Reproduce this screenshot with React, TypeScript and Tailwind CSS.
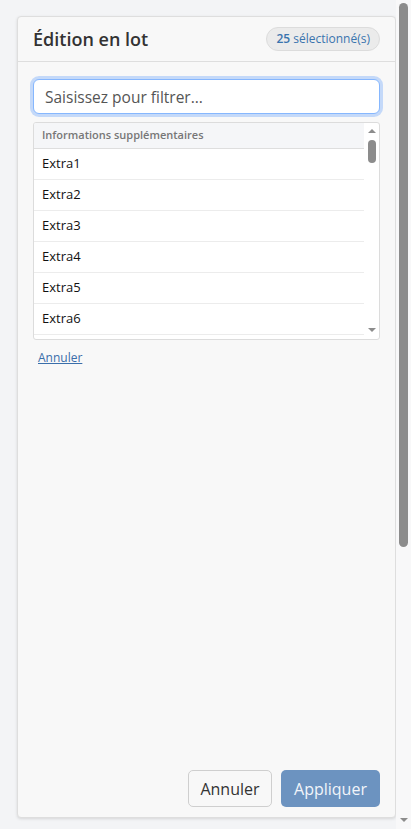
import React from "react";

const extras = ["Extra1", "Extra2", "Extra3", "Extra4", "Extra5", "Extra6", "Extra7"];

// small grey triangle used by the scrollbars
const Arrow: React.FC<{ dir: "up" | "down" }> = ({ dir }) =>
  dir === "up" ? (
    <div className="h-0 w-0 border-x-4 border-b-4 border-x-transparent border-b-[#8c8c8c]" />
  ) : (
    <div className="h-0 w-0 border-x-4 border-t-4 border-x-transparent border-t-[#8c8c8c]" />
  );

const App: React.FC = () => {
  return (
    <div
      className="flex h-[829px] overflow-hidden bg-[#f3f4f6]"
      style={{ fontFamily: '"Open Sans", "Noto Sans", sans-serif' }}
    >
      <div className="flex-1 pl-[17px] pt-4">
        <div className="flex h-[802px] w-[379px] flex-col rounded border border-[#dedede] bg-[#f8f8f8] shadow-[0_1px_3px_rgba(0,0,0,0.12)]">
          {/* Header */}
          <div className="flex h-[45px] shrink-0 items-center justify-between border-b border-[#dedede] pl-[15px] pr-[15px]">
            <h1 className="text-[18px] font-semibold leading-none text-[#333]">Édition en lot</h1>
            <span className="rounded-full border border-[#dcdcdc] bg-[#ebebeb] px-[9px] py-[2px] text-[12px] text-[#3a74ae]">
              <span className="font-semibold">25</span> sélectionné(s)
            </span>
          </div>

          {/* Body */}
          <div className="flex-1 px-[15px] pt-[17px]">
            <input
              type="text"
              placeholder="Saisissez pour filtrer..."
              className="h-[35px] w-full rounded-[6px] border border-[#86b7fe] bg-white px-[11px] text-[15.5px] text-[#333] shadow-[0_0_0_3px_rgba(13,110,253,0.22)] outline-none placeholder:text-[#555]"
            />
            <div className="mt-[8px] flex h-[218px] overflow-hidden rounded-[3px] border border-[#dcdcdc] bg-white">
              <div className="flex-1 overflow-hidden">
                <div className="flex h-[26px] items-center border-b border-[#dedede] bg-[#f5f6f8] px-[8px] text-[11px] font-semibold text-[#777]">
                  Informations supplémentaires
                </div>
                {extras.map((label) => (
                  <div
                    key={label}
                    className="flex h-[31px] items-center border-b border-[#ececec] px-[8px] text-[13px] text-[#111]"
                  >
                    {label}
                  </div>
                ))}
              </div>
              {/* list scrollbar */}
              <div className="flex w-[15px] flex-col items-center pb-[7px] pt-[6px]">
                <Arrow dir="up" />
                <div className="mt-[7px] h-[23px] w-[8px] rounded-full bg-[#8c8c8c]" />
                <div className="flex-1" />
                <Arrow dir="down" />
              </div>
            </div>
            <a href="#" className="mt-[9px] inline-block pl-[5px] text-[12px] text-[#3a6eaa] underline">
              Annuler
            </a>
          </div>

          {/* Footer */}
          <div className="flex shrink-0 justify-end gap-[9px] px-[15px] pb-[10px]">
            <button className="h-[37px] w-[84px] rounded-[5px] border border-[#cfcfcf] bg-[#f8f8f8] text-[16px] text-[#333]">
              Annuler
            </button>
            <button className="h-[37px] w-[99px] rounded-[5px] bg-[#6c93c0] text-[16px] text-[#f2f5fa]">
              Appliquer
            </button>
          </div>
        </div>
      </div>

      {/* page scrollbar */}
      <div className="flex w-[15px] flex-col items-center bg-[#f8f8f9] pb-[7px] pt-[3px]">
        <div className="h-[544px] w-[9px] rounded-full bg-[#8c8c8c]" />
        <div className="flex-1" />
        <Arrow dir="down" />
      </div>
    </div>
  );
};

export default App;
